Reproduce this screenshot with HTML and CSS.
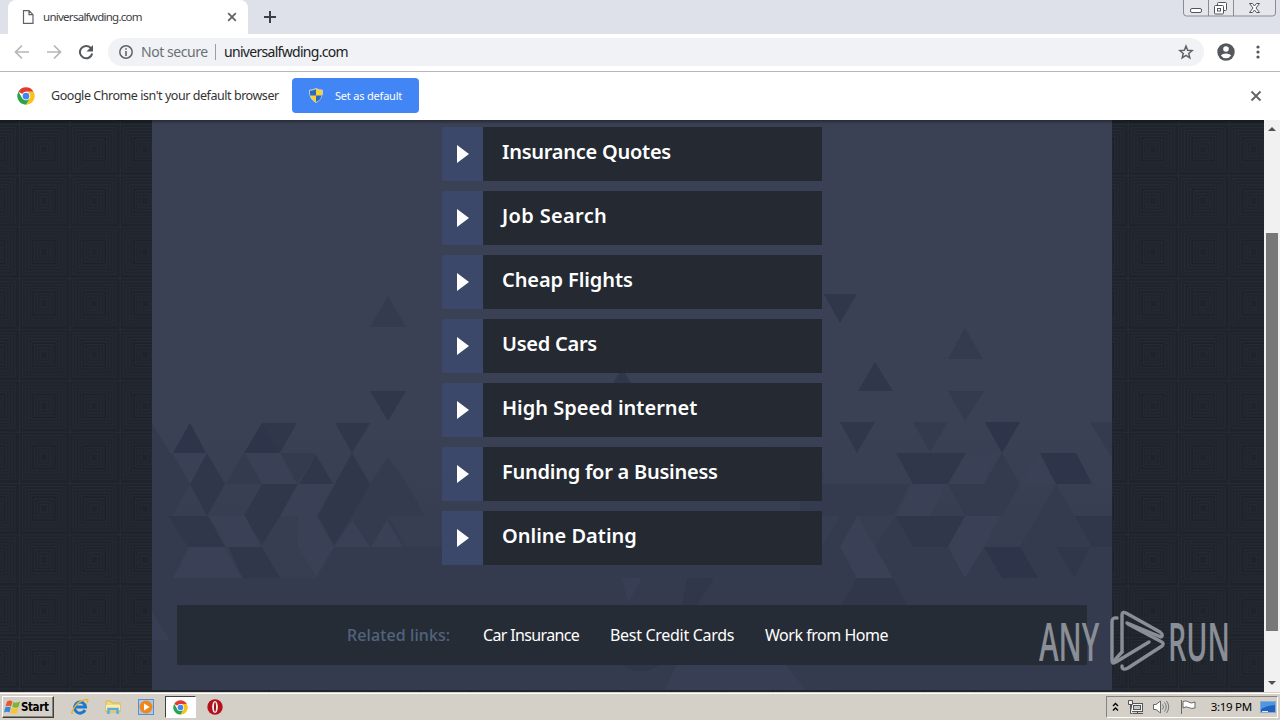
FILE: index.html
```html
<!DOCTYPE html>
<html lang="en">
<head>
    <meta charset="utf-8">
    <title>universalfwding.com</title>
    <link rel="stylesheet" href="styles.css">
</head>
<body>
<svg class="defs" width="0" height="0">
    <defs>
        <symbol id="chrome" viewBox="0 0 48 48">
            <circle cx="24" cy="24" r="23" fill="#fff"/>
            <path fill="#e33b2e" d="M24 24 4 12.500A23 23 0 0 1 44 12.500H24z"/>
            <path fill="#fbc116" d="M24 12.500H44A23 23 0 0 1 24 47L34 29.700z"/>
            <path fill="#2ba24c" d="M4 12.500A23 23 0 0 0 24 47L34 29.700 24 35 14 29.700z"/>
            <circle cx="24" cy="24" r="11.500" fill="#fff"/>
            <circle cx="24" cy="24" r="9" fill="#4285f4"/>
        </symbol>
    </defs>
</svg>

<!-- browser -->
<div class="tabs">
    <div class="tab">
        <svg width="12" height="14" viewBox="0 0 12 14"><path d="M1.500 .7H7l4 4v8.600H1.500zM7 .7v4h4" fill="none" stroke="#5f6368" stroke-width="1.200"/></svg>
        <span class="tab-title">universalfwding.com</span>
        <svg width="10" height="10" viewBox="0 0 10 10"><path d="M1.200 1.200l7.600 7.600M8.800 1.200L1.200 8.800" stroke="#5f6368" stroke-width="1.800"/></svg>
    </div>
    <svg class="new-tab" width="12" height="12" viewBox="0 0 12 12"><path d="M6 0v12M0 6h12" stroke="#3c4043" stroke-width="2"/></svg>
    <svg class="win-buttons" width="94" height="18" viewBox="0 0 94 18">
        <path d="M.5 0v13q0 3 3 3h86q3 0 3-3V0M25.500 0v16M50.500 0v16" fill="#e4e6eb" stroke="#8a8c93"/>
        <g fill="#fff" stroke="#50545c">
            <rect x="7.500" y="8.500" width="11" height="4" rx="1.500"/>
            <rect x="34.500" y="2.500" width="9" height="8" rx="1"/>
            <rect x="31.500" y="5.500" width="9" height="8.500" rx="1"/>
            <rect x="34.500" y="8.500" width="3" height="2.500"/>
            <path d="M66.500 3.500h3l2 2.500 2-2.500h3L73 8l3.500 4.500h-3l-2-2.500-2 2.500h-3L70 8z"/>
        </g>
    </svg>
</div>

<div class="toolbar">
    <svg class="nav" width="16" height="16" viewBox="0 0 16 16"><path d="M15 8H2M8 1.500L1.500 8 8 14.500" fill="none" stroke="#b4b6b9" stroke-width="1.700"/></svg>
    <svg class="nav" width="16" height="16" viewBox="0 0 16 16"><path d="M1 8h13M8 1.500L14.500 8 8 14.500" fill="none" stroke="#b4b6b9" stroke-width="1.700"/></svg>
    <svg class="nav" width="16" height="16" viewBox="0 0 16 16"><path d="M13.200 4.500A6.200 6.200 0 1 0 14.200 9.500" fill="none" stroke="#54575b" stroke-width="2"/><path d="M15 1v6.500H8.500z" fill="#54575b"/></svg>
    <div class="address">
        <svg width="14" height="14" viewBox="0 0 14 14"><circle cx="7" cy="7" r="6.200" fill="none" stroke="#5f6368" stroke-width="1.500"/><path d="M7 3.200v1.600M7 6v5" stroke="#5f6368" stroke-width="1.600"/></svg>
        <span class="not-secure">Not secure</span>
        <span class="divider"></span>
        <span class="url">universalfwding.com</span>
        <svg class="star" width="16" height="16" viewBox="0 0 24 24"><path d="M12 3l2.500 6.300 6.700.5-5.100 4.300 1.600 6.600L12 17.100l-5.700 3.600 1.600-6.600-5.100-4.300 6.700-.5z" fill="none" stroke="#5f6368" stroke-width="2.200"/></svg>
    </div>
    <svg class="profile" width="18" height="18" viewBox="0 0 18 18"><circle cx="9" cy="9" r="8.700" fill="#54575b"/><circle cx="9" cy="6" r="2.800" fill="#fff"/><path d="M3.800 12.600Q5.500 10.500 9 10.500t5.200 2.100Q12.300 15.300 9 15.300t-5.200-2.700z" fill="#fff"/></svg>
    <svg width="4" height="14" viewBox="0 0 4 14" fill="#54575b"><circle cx="2" cy="2" r="1.600"/><circle cx="2" cy="7" r="1.600"/><circle cx="2" cy="12" r="1.600"/></svg>
</div>

<div class="infobar">
    <svg class="info-logo" width="18" height="18"><use href="#chrome"/></svg>
    <span class="info-text">Google Chrome isn't your default browser</span>
    <div class="info-button">
        <svg width="14" height="15" viewBox="0 0 14 15">
            <path d="M7 .5Q10 2 13.500 2.200 14 11 7 14.500 0 11 .5 2.200 4 2 7 .5z" fill="#fbd130" stroke="#c9cfdb"/>
            <path d="M7 1.200V7.500H1.200Q.8 5 1 2.700 4.500 2.500 7 1.200zM7 7.500h5.700Q11.500 12 7 14z" fill="#2a6ac4"/>
        </svg>
        <span>Set as default</span>
    </div>
    <svg class="info-close" width="12" height="12" viewBox="0 0 12 12"><path d="M1.500 1.500l9 9M10.500 1.500l-9 9" stroke="#5f6368" stroke-width="1.800"/></svg>
</div>

<!-- page -->
<div class="viewport">
    <div class="page">
        <svg class="tiles" width="1264" height="572">
            <defs>
                <pattern id="squares" x="19" y="4" width="50.400" height="51.300" patternUnits="userSpaceOnUse">
                    <g fill="none" stroke="#262b34" stroke-width="1">
                        <path d="M0 0H50.400M0 0V51.300" stroke-width="2"/>
                        <rect x="3.500" y="3.500" width="43" height="44"/>
                        <rect x="6.500" y="6.500" width="37" height="38"/>
                        <rect x="9.500" y="9.500" width="31" height="32"/>
                        <rect x="12.500" y="12.500" width="25" height="26"/>
                        <rect x="15.500" y="15.500" width="19" height="20"/>
                        <rect x="18.500" y="18.500" width="13" height="14"/>
                        <rect x="21.500" y="21.500" width="7" height="8"/>
                    </g>
                    <rect x="14" y="14" width="22" height="23" fill="none" stroke="#1b2027"/>
                </pattern>
            </defs>
            <rect width="1264" height="572" fill="#1f242c"/>
            <rect width="1264" height="572" fill="url(#squares)"/>
        </svg>
        <div class="panel">
            <svg class="mosaic" width="960" height="570" viewBox="152 120 960 570">
                <g fill="#353b4f">
                    <path d="M388 296l18 31h-36zM965 328l18 31h-35zM948 391h36l-19 30zM913 422h35l-18 30z"/>
                    <path d="M152 423l18 30 2 0 18 31-18 32h-20zM244 453l18 31h-36zM280 453h37l-20 31zM388 457l19 27 18 32h-73v-32h18z"/>
                    <path d="M152 516h16l20 31-15 31h-21zM1002 453l18 31-18 32h-37l-17-32h36zM800 484h110l-17 32h-93zM1056 484l18 32-18 31h-36zM1090 422h22v36z"/>
                    <path d="M334 547l18-31h36l18 31h416l18-31h17l-17 31 17 31H317zM896 516h69l-17 31 17 31 19-31h36l36-31 56 0v62H893l-18-31z"/>
                    <path d="M152 578h960v112H152z"/>
                </g>
                <g fill="#31374b">
                    <path d="M262 423h35l-17 30zM335 423h35l-18 30zM370 391h36l-18 30zM824 294h33l-17 29zM875 362l18 29h-35zM840 422h35l-18 31zM622 368l18 31h-36z"/>
                    <path d="M207 453l18 31-18 32-17-32zM316 455l17 29h-34zM352 453l18 31-18 32-18 29-16-29 17-32zM262 484h36l-18 32-18 29-18-29z"/>
                    <path d="M168 516h40l17 31h-37zM228 547h34l18 31h-37zM896 453h70l-18 31h-35zM896 516h52l17 0-17 31h-35z"/>
                    <path d="M857 578h36l14 27h-65zM1056 547h34l-16 31zM1075 516h37v31h-20zM687 578h27l-17 27h-15zM622 665h38l-12 6h-16z"/>
                </g>
                <g fill="#2e3449">
                    <path d="M190 423l16 30h-33zM262 423l18 30h-36zM985 422h35l-18 31zM1040 453h36l16 31h-36zM984 547h36l18 31h-36z"/>
                </g>
                <g fill="#3a4055">
                    <path d="M173 453h34l-17 31zM246 453h34l17 31h-35zM190 547h34l18 31h-69zM352 520l18 27h-36zM298 484h36l-18 32h-36zM298 516h18l18 31-18 29-18-29z"/>
                    <path d="M913 484h33l-16 32h-34zM857 516l36 62h-36l-17-31zM965 516h35l-16 31-19 31-17-31zM966 453h34l-16 31h-36z"/>
                    <path d="M209 516h36l16 31h-34zM387 520l16 27h-32zM1038 453l18 31h-36z"/>
                </g>
                <g fill="#383e53">
                    <path d="M152 612l18 28h-18zM622 578h20l-14 25zM665 690l11-25h110l20 25z"/>
                </g>
            </svg>
            <ul class="links">
                <li><span class="arrow"></span><a class="l1">Insurance Quotes</a></li>
                <li><span class="arrow"></span><a class="l2">Job Search</a></li>
                <li><span class="arrow"></span><a class="l3">Cheap Flights</a></li>
                <li><span class="arrow"></span><a class="l4">Used Cars</a></li>
                <li><span class="arrow"></span><a class="l5">High Speed internet</a></li>
                <li><span class="arrow"></span><a class="l6">Funding for a Business</a></li>
                <li><span class="arrow"></span><a class="l7">Online Dating</a></li>
            </ul>
            <div class="related">
                <span class="related-title">Related links:</span>
                <a class="r1">Car Insurance</a>
                <a class="r2">Best Credit Cards</a>
                <a class="r3">Work from Home</a>
            </div>
        </div>
        <div class="watermark">
            <span class="any">ANY</span>
            <svg width="56" height="62" viewBox="0 0 56 62" fill="none" stroke="#8a8e96" stroke-width="3.400" stroke-linejoin="round" stroke-linecap="round">
                <path d="M7 8Q2 7 2 12V50Q2 55 6 52L39 32"/>
                <path d="M12 42V5Q12 1 16 3L50 22Q54 25 51 27L17 13"/>
                <path d="M12 42L3 52M12 56Q12 61 18 58L52 36Q55 33 50 31L18 14"/>
            </svg>
            <span class="run">RUN</span>
        </div>
    </div>
    <div class="scrollbar">
        <i class="up"></i>
        <span class="thumb"></span>
        <i class="down"></i>
    </div>
</div>

<!-- taskbar -->
<div class="taskbar">
    <div class="start">
        <svg width="17" height="16" viewBox="0 0 17 16">
            <path d="M3 2.500Q6 .5 8.500 2.500L7 7.500Q4.500 6 1.500 7.500z" fill="#e9572b"/>
            <path d="M9.500 3Q12 4.500 16 2.500L14.500 8Q11.500 9.500 8.200 7.800z" fill="#7db52c"/>
            <path d="M1.200 8.500Q4 7 6.800 8.500L5.500 13.500Q3 12 0 13.500z" fill="#3a86d8"/>
            <path d="M7.800 9Q11 10.500 14.200 9L13 14Q9.500 15.500 6.500 14z" fill="#f9c52b"/>
        </svg>
        <span>Start</span>
    </div>
    <div class="quick">
        <svg width="18" height="18" viewBox="0 0 18 18">
            <path d="M14 12A5.500 5.500 0 1 1 14.500 9H5" fill="none" stroke="#1c78cc" stroke-width="3"/>
            <path d="M2 15Q-1 17 3 10T15 1.500q3-.5 1 3.500" fill="none" stroke="#e9b52c" stroke-width="1.400"/>
        </svg>
        <svg width="18" height="18" viewBox="0 0 18 18">
            <path d="M2 3h5l1 2h8v9H2z" fill="#f3d87b" stroke="#d8b750"/>
            <path d="M2 7h14v5H2z" fill="#fbeeb0"/>
            <path d="M4.500 16v-5h9v5" fill="none" stroke="#5aaedb" stroke-width="2.500"/>
        </svg>
        <svg width="18" height="18" viewBox="0 0 18 18">
            <rect x="1.500" y="1.500" width="15" height="15" fill="#a9c9ec" stroke="#5b8fc9"/>
            <circle cx="9" cy="9" r="6.500" fill="#f0871c"/>
            <path d="M7 5.500v7L12.500 9z" fill="#fff"/>
        </svg>
    </div>
    <div class="active"><svg width="15" height="15"><use href="#chrome"/></svg></div>
    <svg class="opera" width="16" height="16" viewBox="0 0 16 16"><circle cx="8" cy="8" r="7.700" fill="#b3121b"/><ellipse cx="8" cy="8" rx="2.900" ry="6" fill="#f8eeee"/><ellipse cx="8" cy="8" rx="1" ry="4.800" fill="#a01018"/></svg>
    <div class="tray">
        <svg width="7" height="10" viewBox="0 0 7 10"><path d="M1 4l2.500-2.500L6 4M1 8.500L3.500 6 6 8.500" fill="none" stroke="#000" stroke-width="1.400"/></svg>
        <svg class="net" width="17" height="16" viewBox="0 0 17 16"><g fill="#f5f5f3" stroke="#55565a"><rect x="4.500" y="4.500" width="11" height="8"/><rect x="6.500" y="6.500" width="7" height="4" fill="#c9c9c6"/><path d="M6 14.500h10M10.500 12.500v2"/><path d="M1.500 1.500h4v4h-4zM3.500 5.500v9h2"/></g></svg>
        <svg class="snd" width="18" height="16" viewBox="0 0 18 16"><path d="M1.500 5.500H4L8.500 2v12L4 10.500H1.500z" fill="#fff" stroke="#66676b"/><path d="M10.500 5.500q2 2.500 0 5M12.500 3.500q3.500 4.500 0 9M14.500 2q4.500 6 0 12" fill="none" stroke="#77787c"/></svg>
        <svg class="flag" width="18" height="16" viewBox="0 0 18 16"><path d="M2.500 1v14M4 2.500q3-1.500 5.500.5t6.500 0v6q-4 1-6.500-.5T4 9z" fill="#fff" stroke="#66676b"/></svg>
        <span class="clock">3:19 PM</span>
        <svg width="16" height="14" viewBox="0 0 16 14"><rect x=".5" y="1.500" width="15" height="11" fill="#1f63bd" stroke="#8ba9cf"/><path d="M1 2h14v3Q8 5 1 9z" fill="#4f97e2"/><path d="M2 11.500h6" stroke="#dfe9f5"/></svg>
    </div>
</div>
</body>
</html>
```
FILE: styles.css
```css
body {
    margin: 0;
    width: 1280px;
    height: 720px;
    overflow: hidden;
    display: flex;
    flex-direction: column;
    font-family: "Noto Sans", "DejaVu Sans", sans-serif;
    background: #fff;
}
svg {
    flex: none;
    display: block;
}
.defs {
    position: absolute;
}
span, a {
    white-space: nowrap;
}

/* browser */
.tabs {
    height: 34px;
    background: #dee1e9;
    display: flex;
    align-items: center;
}
.tab {
    box-sizing: border-box;
    width: 240px;
    height: 34px;
    margin-left: 8px;
    padding: 0 11px 0 14px;
    border-radius: 8px 8px 0 0;
    background: #fff;
    display: flex;
    align-items: center;
}
.tab-title {
    flex: 1;
    margin: -2px 0 0 9px;
    font-size: 11.5px;
    letter-spacing: -0.73px;
    color: #3c4043;
}
.new-tab {
    margin-left: 16px;
}
.win-buttons {
    align-self: flex-start;
    margin-left: auto;
    margin-right: 3px;
}
.toolbar {
    box-sizing: border-box;
    height: 38px;
    padding: 0 20px 2px 14px;
    border-bottom: 1px solid #b5b7ba;
    display: flex;
    align-items: center;
}
.nav {
    margin-right: 16px;
}
.address {
    box-sizing: border-box;
    width: 1096px;
    height: 28px;
    margin-left: -2px;
    padding: 0 10px 0 11px;
    border-radius: 14px;
    background: #f0f2f5;
    display: flex;
    align-items: center;
    font-size: 14px;
}
.not-secure {
    width: 67px;
    margin-left: 8px;
    letter-spacing: -0.45px;
    color: #6b6f74;
}
.divider {
    width: 1px;
    height: 16px;
    margin: 0 8px 0 7px;
    background: #9a9da1;
}
.url {
    letter-spacing: -0.7px;
    color: #202124;
}
.star {
    margin-left: auto;
}
.profile {
    margin: 0 21px 0 13px;
}
.infobar {
    box-sizing: border-box;
    height: 48px;
    padding: 0 18px 1px 17px;
    display: flex;
    align-items: center;
    font-size: 12.5px;
    color: #333;
}
.info-text {
    width: 228px;
    margin: 0 13px 0 16px;
    letter-spacing: -0.45px;
}
.info-button {
    box-sizing: border-box;
    width: 127px;
    height: 35px;
    padding-left: 17px;
    border-radius: 4px;
    background: #4285f4;
    display: flex;
    align-items: center;
    gap: 12px;
    color: #fff;
    font-size: 11px;
    letter-spacing: -0.2px;
}
.info-close {
    margin-left: auto;
}

/* page */
.viewport {
    height: 572px;
    display: flex;
}
.page {
    position: relative;
    width: 1264px;
    height: 572px;
    overflow: hidden;
}
.page::before {
    content: "";
    position: absolute;
    z-index: 1;
    top: 0;
    left: 0;
    width: 1264px;
    height: 4px;
    background: linear-gradient(rgba(0, 0, 0, .35), transparent);
}
.tiles, .mosaic {
    position: absolute;
    top: 0;
    left: 0;
}
.panel {
    position: relative;
    box-sizing: border-box;
    width: 960px;
    height: 570px;
    margin-left: 152px;
    padding-top: 7px;
    background: linear-gradient(#3b4154 0, #3b4154 310px, #383e52 400px, #373d51 100%);
}
.links {
    position: relative;
    width: 380px;
    margin: 0 0 0 290px;
    padding: 0;
    list-style: none;
    display: flex;
    flex-direction: column;
    gap: 10px;
}
.links li {
    height: 54px;
    display: flex;
    background: #242932;
}
.arrow {
    box-sizing: border-box;
    width: 41px;
    background: #3b4869;
    padding: 18px 0 0 15px;
}
.arrow::before {
    content: "";
    display: block;
    width: 0;
    border-left: 12px solid #fff;
    border-top: 9.5px solid transparent;
    border-bottom: 9.5px solid transparent;
}
.links a {
    margin-left: 19px;
    font-size: 20px;
    font-weight: 600;
    line-height: 50px;
    color: #fff;
}
.l1, .l4, .l6 {
    letter-spacing: -0.25px;
}
.l2 {
    letter-spacing: 0.35px;
}
.l3 {
    letter-spacing: -0.1px;
}
.related {
    position: relative;
    box-sizing: border-box;
    width: 910px;
    height: 60px;
    margin: 40px 0 0 25px;
    padding-left: 170px;
    background: #262c35;
    display: flex;
    line-height: 60px;
    font-size: 16px;
    color: #fff;
}
.related-title {
    width: 136px;
    color: #50647f;
    font-weight: 500;
    letter-spacing: 0.1px;
}
.r1 {
    width: 127px;
    letter-spacing: -0.65px;
}
.r2 {
    width: 155px;
    letter-spacing: -0.3px;
}
.r3 {
    letter-spacing: -0.47px;
}
.watermark {
    position: absolute;
    left: 1039px;
    top: 490px;
    display: flex;
    align-items: center;
    color: #8a8e96;
    font-family: "Open Sans", sans-serif;
    font-size: 53px;
    font-weight: 600;
    line-height: 62px;
}
.any, .run {
    transform: scaleX(0.56);
    transform-origin: left;
}
.any {
    width: 71px;
}
.run {
    width: 62px;
    margin-left: 2px;
    transform: scaleX(0.54);
}
.scrollbar {
    width: 16px;
    background: #f1f1f1;
    display: flex;
    flex-direction: column;
    align-items: center;
}
.up, .down {
    width: 0;
    border: 4px solid transparent;
}
.up {
    margin-top: 3px;
    border-bottom-color: #505050;
}
.down {
    margin-top: auto;
    margin-bottom: 3px;
    border-top-color: #505050;
}
.thumb {
    width: 12px;
    height: 398px;
    margin-top: 102px;
    background: #787878;
}

/* taskbar */
.taskbar {
    box-sizing: border-box;
    height: 28px;
    border-top: 1px solid #d4d0c8;
    box-shadow: inset 0 1px #fff;
    background: #d4d0c8;
    display: flex;
    align-items: center;
    padding: 1px 2px 0;
}
.start {
    box-sizing: border-box;
    width: 52px;
    height: 22px;
    padding-left: 1px;
    border: 1px solid;
    border-color: #fff #404040 #404040 #fff;
    box-shadow: inset -1px -1px #87847e;
    display: flex;
    align-items: center;
    font: bold 11.5px "DejaVu Sans Condensed", "DejaVu Sans", sans-serif;
    letter-spacing: -0.4px;
}
.quick {
    display: flex;
    gap: 15px;
    margin-left: 17px;
}
.active {
    box-sizing: border-box;
    width: 31px;
    height: 22px;
    margin-left: 10px;
    border: 1px solid;
    border-color: #404040 #fff #fff #404040;
    background: #fff;
    display: flex;
    align-items: center;
    justify-content: center;
}
.opera {
    margin-left: 11px;
}
.tray {
    box-sizing: border-box;
    width: 172px;
    height: 22px;
    margin-left: auto;
    padding: 0 1px 0 5px;
    border: 1px solid;
    border-color: #87847e #fff #fff #87847e;
    display: flex;
    align-items: center;
    justify-content: space-between;
    font-size: 11.5px;
    letter-spacing: -0.3px;
}
.clock {
    margin: -2px 0 0 6px;
}
```
